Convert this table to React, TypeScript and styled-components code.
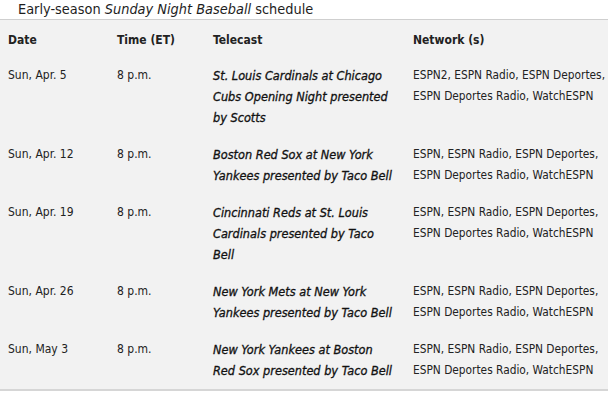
import styled, { createGlobalStyle } from 'styled-components';

const GlobalStyle = createGlobalStyle`
	html, body {
		margin: 0;
		padding: 0;
		background: #ffffff;
	}
	body {
		font-family: 'DejaVu Sans Condensed', 'DejaVu Sans', Tahoma, sans-serif;
		color: #222;
	}
`;

const Wrapper = styled.div`
	width: 608px;
`;

const Title = styled.h2`
	margin: 0;
	padding: 1px 0 0 18px;
	height: 18px;
	line-height: 17px;
	font-size: 14.4px;
	font-weight: normal;
	color: #1e1e1e;
	border-bottom: 1px solid #cfcfcf;
`;

const Table = styled.table`
	width: 608px;
	border-collapse: collapse;
	background: #f2f2f2;
	border-bottom: 2px solid #d6d6d6;
	font-size: 12px;
	line-height: 21px;
	color: #222;
	table-layout: fixed;
`;

const HeadCell = styled.th<{ $w: number }>`
	width: ${(p) => p.$w - 8}px;
	text-align: left;
	font-weight: bold;
	padding: 10px 0 6px 8px;
	vertical-align: top;
`;

const Cell = styled.td<{ $italic?: boolean; $size?: number }>`
	padding: 8px 0 8px 8px;
	vertical-align: top;
	white-space: nowrap;
	font-style: ${(p) => (p.$italic ? 'italic' : 'normal')};
	font-size: ${(p) => p.$size ?? 12}px;
	color: ${(p) => (p.$italic ? '#111' : '#222')};
	-webkit-text-stroke: ${(p) => (p.$italic ? '0.3px #111' : '0')};
`;

const Line = styled.span`
	display: block;
`;

interface IGame {
	date: string;
	telecast: string[];
	network: string[];
}

const espn = ['ESPN, ESPN Radio, ESPN Deportes,', 'ESPN Deportes Radio, WatchESPN'];

const games: IGame[] = [
	{
		date: 'Sun, Apr. 5',
		telecast: ['St. Louis Cardinals at Chicago', 'Cubs Opening Night presented', 'by Scotts'],
		network: ['ESPN2, ESPN Radio, ESPN Deportes,', 'ESPN Deportes Radio, WatchESPN'],
	},
	{
		date: 'Sun, Apr. 12',
		telecast: ['Boston Red Sox at New York', 'Yankees presented by Taco Bell'],
		network: espn,
	},
	{
		date: 'Sun, Apr. 19',
		telecast: ['Cincinnati Reds at St. Louis', 'Cardinals presented by Taco', 'Bell'],
		network: espn,
	},
	{
		date: 'Sun, Apr. 26',
		telecast: ['New York Mets at New York', 'Yankees presented by Taco Bell'],
		network: espn,
	},
	{
		date: 'Sun, May 3',
		telecast: ['New York Yankees at Boston', 'Red Sox presented by Taco Bell'],
		network: espn,
	},
];

export default function App() {
	return (
		<Wrapper>
			<GlobalStyle />
			<Title>
				Early-season <em>Sunday Night Baseball</em> schedule
			</Title>
			<Table>
				<thead>
					<tr>
						<HeadCell $w={109}>Date</HeadCell>
						<HeadCell $w={96}>Time (ET)</HeadCell>
						<HeadCell $w={200}>Telecast</HeadCell>
						<HeadCell $w={203}>Network (s)</HeadCell>
					</tr>
				</thead>
				<tbody>
					{games.map((g) => (
						<tr key={g.date}>
							<Cell>{g.date}</Cell>
							<Cell>8 p.m.</Cell>
							<Cell $italic $size={12.6}>
								{g.telecast.map((t) => (
									<Line key={t}>{t}</Line>
								))}
							</Cell>
							<Cell $size={11.8}>
								{g.network.map((n) => (
									<Line key={n}>{n}</Line>
								))}
							</Cell>
						</tr>
					))}
				</tbody>
			</Table>
		</Wrapper>
	);
}
